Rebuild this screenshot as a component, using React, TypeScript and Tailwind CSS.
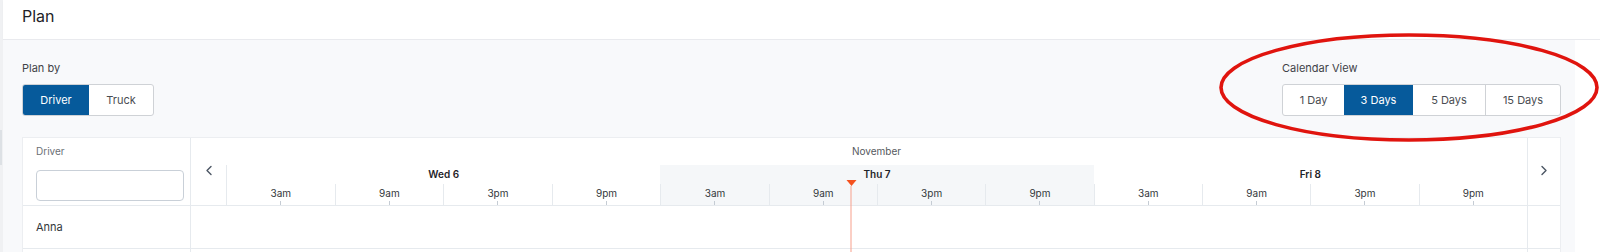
import React from "react";

const days = [
    { label: "Wed 6", today: false },
    { label: "Thu 7", today: true },
    { label: "Fri 8", today: false },
];

const hours = ["3am", "9am", "3pm", "9pm"];

const drivers = ["Anna"];

// hours since the start of the visible range (Wed 00:00)
const nowHours = 34.6;
const rangeHours = 72;

function Chevron({ dir }: { dir: "left" | "right" }) {
    return (
        <svg width="8" height="11" viewBox="0 0 8 11" fill="none">
            <path
                d={dir === "left" ? "M6 1.5 L2 5.5 L6 9.5" : "M2 1.5 L6 5.5 L2 9.5"}
                stroke="#4b5563"
                strokeWidth="1.4"
                strokeLinecap="round"
                strokeLinejoin="round"
            />
        </svg>
    );
}

function ToggleGroup({
    options,
    active,
    widths,
}: {
    options: string[];
    active: string;
    widths: string[];
}) {
    return (
        <div className="flex h-[32px] overflow-hidden rounded-[3px] border border-[#cfd2d6] bg-white">
            {options.map((opt, i) => (
                <button
                    key={opt}
                    type="button"
                    className={`${widths[i]} flex items-center justify-center text-[11px] ${
                        i > 0 && options[i - 1] !== active && opt !== active ? "border-l border-[#cfd2d6]" : ""
                    } ${opt === active ? "bg-[#065a9b] text-white" : "text-[#4a4d52]"}`}
                >
                    {opt}
                </button>
            ))}
        </div>
    );
}

export default function App() {
    return (
        <div className="relative flex h-[252px] w-[1600px] overflow-hidden bg-white font-['Inter','Noto_Sans',sans-serif] text-[#2b2f33]">
            <div className="flex w-[3px] shrink-0 flex-col bg-[#f0f1f3]">
                <div className="mt-[130px] h-[35px] w-[2px] bg-[#dde1e5]" />
            </div>

            <div className="flex min-w-0 flex-1 flex-col">
                <header className="h-[40px] shrink-0 border-b border-[#e9eaee] bg-white pl-[19px] pt-[4px] shadow-[0_1px_2px_rgba(0,0,0,0.03)]">
                    <h1 className="text-[16px] leading-6 text-[#1f2328]">Plan</h1>
                </header>

                <div className="flex flex-1">
                    <main className="flex-1 bg-[#f8f9fb] pl-[19px] pr-[14px] pt-[20px]">
                        <div className="flex justify-between">
                            <div>
                                <div className="text-[11px] leading-4 text-[#3f4348]">Plan by</div>
                                <div className="mt-2">
                                    <ToggleGroup
                                        options={["Driver", "Truck"]}
                                        active="Driver"
                                        widths={["w-[66px]", "w-[64px]"]}
                                    />
                                </div>
                            </div>
                            <div>
                                <div className="text-[11px] leading-4 text-[#3f4348]">Calendar View</div>
                                <div className="mt-2">
                                    <ToggleGroup
                                        options={["1 Day", "3 Days", "5 Days", "15 Days"]}
                                        active="3 Days"
                                        widths={["w-[61px]", "w-[69px]", "w-[72px]", "w-[75px]"]}
                                    />
                                </div>
                            </div>
                        </div>

                        <div className="mt-[21px] flex border border-[#eceef1] bg-white">
                            {/* driver column */}
                            <div className="w-[168px] border-r border-[#e6eaee]">
                                <div className="h-[68px] border-b border-[#e6eaee] pl-[13px] pt-[7px]">
                                    <div className="text-[10px] leading-3 text-[#6b7075]">Driver</div>
                                    <input className="mt-[13px] h-[31px] w-[148px] rounded-[4px] border border-[#c9d0d8] bg-white outline-none" />
                                </div>
                                {drivers.map((d) => (
                                    <div
                                        key={d}
                                        className="flex h-[43px] items-center border-b border-[#e6eaee] pl-[13px] text-[11px] text-[#33373b]"
                                    >
                                        {d}
                                    </div>
                                ))}
                            </div>

                            {/* prev */}
                            <div className="w-[35px]">
                                <div className="flex h-[68px] justify-center border-b border-[#e6eaee] pt-[27px]">
                                    <Chevron dir="left" />
                                </div>
                                {drivers.map((d) => (
                                    <div key={d} className="h-[43px] border-b border-[#e6eaee]" />
                                ))}
                            </div>

                            {/* timeline */}
                            <div className="relative flex-1">
                                <div className="h-[68px] border-b border-[#e6eaee]">
                                    <div className="flex h-[27px] items-center justify-center text-[10px] text-[#55595e]">
                                        November
                                    </div>
                                    <div className="flex h-[40px] border-l border-[#e6eaee]">
                                        {days.map((day, di) => (
                                            <div
                                                key={day.label}
                                                className={`flex flex-1 flex-col ${day.today ? "bg-[#f5f7f9]" : ""}`}
                                            >
                                                <div className="flex h-[19px] items-center justify-center text-[10px] font-semibold text-[#1f2328]">
                                                    {day.label}
                                                </div>
                                                <div className="flex flex-1">
                                                    {hours.map((h, hi) => (
                                                        <div
                                                            key={h}
                                                            className={`flex flex-1 flex-col items-center pt-[3px] ${
                                                                di > 0 || hi > 0 ? "border-l border-[#e6eaee]" : ""
                                                            }`}
                                                        >
                                                            <span className="text-[10px] leading-3 text-[#33373b]">{h}</span>
                                                            <div className="mt-auto h-[4px] w-px bg-[#c5ccd4]" />
                                                        </div>
                                                    ))}
                                                </div>
                                            </div>
                                        ))}
                                    </div>
                                </div>
                                {drivers.map((d) => (
                                    <div key={d} className="h-[43px] border-b border-[#e6eaee]" />
                                ))}
                                <div className="h-[10px]" />

                                {/* now marker */}
                                <div
                                    className="absolute bottom-0 top-[42px] flex w-[11px] -translate-x-1/2 flex-col items-center"
                                    style={{ left: `${(nowHours / rangeHours) * 100}%` }}
                                >
                                    <div className="h-0 w-0 border-x-[5.5px] border-t-[6px] border-x-transparent border-t-[#f4511e]" />
                                    <div className="w-[1.5px] flex-1 bg-[#f7a08c]" />
                                </div>
                            </div>

                            {/* next */}
                            <div className="w-[33px] border-l border-[#e6eaee]">
                                <div className="flex h-[68px] justify-center border-b border-[#e6eaee] pt-[27px]">
                                    <Chevron dir="right" />
                                </div>
                                {drivers.map((d) => (
                                    <div key={d} className="h-[43px] border-b border-[#e6eaee]" />
                                ))}
                            </div>
                        </div>
                    </main>
                    <div className="w-[25px] shrink-0 bg-white" />
                </div>
            </div>

            {/* hand-drawn annotation */}
            <svg
                className="pointer-events-none absolute left-[1218px] top-[31px]"
                width="384"
                height="114"
                viewBox="0 0 384 114"
                fill="none"
            >
                <ellipse cx="191" cy="56.5" rx="188" ry="52.5" stroke="#e0140e" strokeWidth="3.6" />
            </svg>
        </div>
    );
}
